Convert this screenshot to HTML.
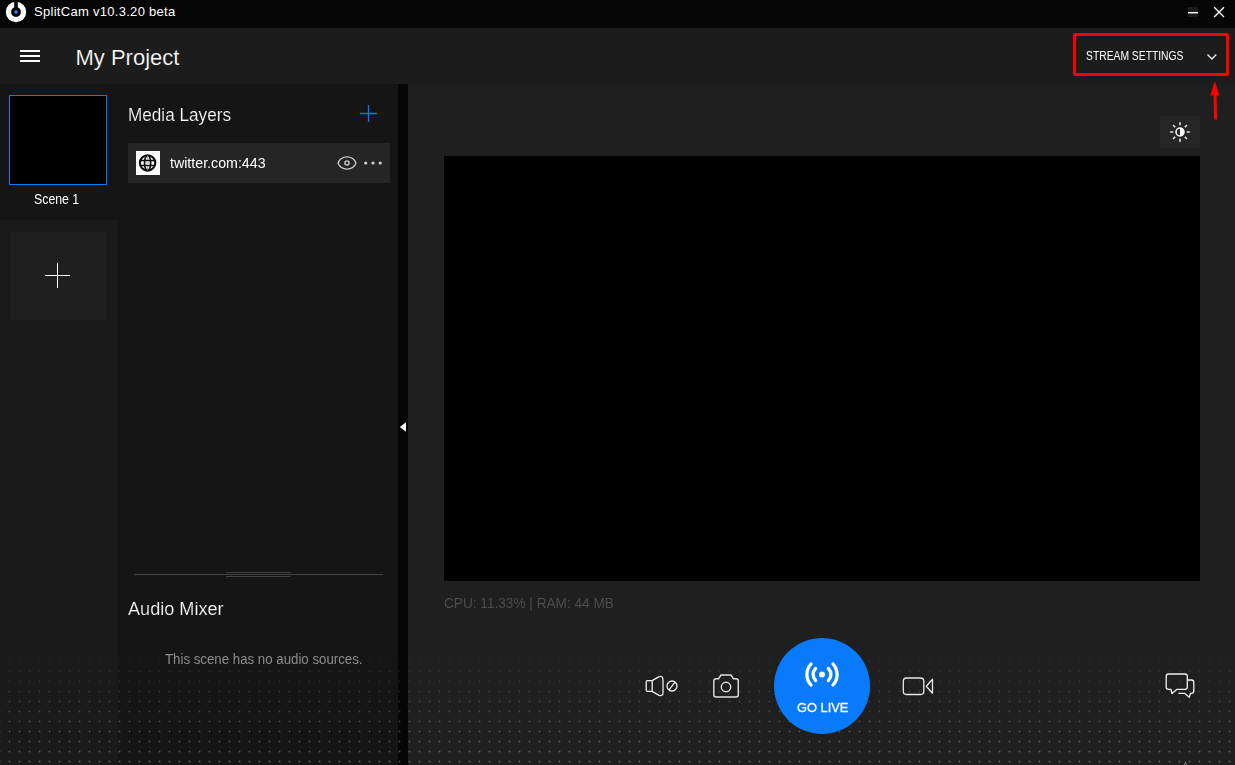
<!DOCTYPE html>
<html>
<head>
<meta charset="utf-8">
<title>SplitCam</title>
<style>
*{margin:0;padding:0;box-sizing:border-box;}
html,body{width:1235px;height:765px;overflow:hidden;background:#1f1f1f;}
body{position:relative;font-family:"Liberation Sans",sans-serif;color:#fff;}
.abs{position:absolute;}
.t{position:absolute;white-space:nowrap;line-height:1;transform-origin:0 0;}
#titlebar{left:0;top:0;width:1235px;height:28px;background:#060606;}
#header{left:0;top:28px;width:1235px;height:56px;background:#1c1c1c;}
#scenes{left:0;top:84px;width:118px;height:681px;background:#1a1a1a;}
#scenesel{left:0;top:84px;width:118px;height:136px;background:#151515;}
#media{left:118px;top:84px;width:280px;height:681px;background:#151515;}
#divider{left:398px;top:84px;width:10px;height:681px;background:#050505;}
#main{left:408px;top:84px;width:827px;height:681px;background:#1f1f1f;}
#preview{left:444px;top:156px;width:756px;height:425px;background:#000;}
#thumb{left:9px;top:95px;width:98px;height:90px;background:#000;border:1px solid #0b7af5;}
#addscene{left:10px;top:232px;width:96px;height:88px;background:#1f1f1f;}
#layer{left:128px;top:143px;width:262px;height:40px;background:#252525;}
#globebox{left:136px;top:151px;width:24px;height:24px;background:#fff;}
#bright{left:1160px;top:116px;width:40px;height:32px;background:#262626;}
#redbox{left:1073px;top:33px;width:156px;height:43px;border:3px solid #f00;border-radius:2px;}
#golive{left:774px;top:638px;width:96px;height:96px;border-radius:50%;background:#077bfb;}
svg{position:absolute;overflow:visible;}
</style>
</head>
<body>
<div class="abs" id="titlebar"></div>
<div class="abs" id="header"></div>
<div class="abs" id="scenes"></div>
<div class="abs" id="scenesel"></div>
<div class="abs" id="media"></div>
<div class="abs" id="divider"></div>
<div class="abs" id="main"></div>

<!-- title bar -->
<svg style="left:0;top:0" width="40" height="28" viewBox="0 0 40 28">
  <circle cx="16" cy="12" r="10.2" fill="#fff"/>
  <circle cx="16" cy="12" r="4.9" fill="#060606"/>
  <rect x="14.2" y="0" width="3.6" height="9" fill="#060606"/>
  <circle cx="16" cy="12" r="1.7" fill="#2f8cff"/>
</svg>
<div class="t" id="title" style="left:34px;top:5px;font-size:13px;letter-spacing:0.29px;color:#fff;">SplitCam v10.3.20 beta</div>
<svg style="left:1180px;top:0" width="55" height="28" viewBox="0 0 55 28">
  <rect x="8" y="7" width="10" height="10" fill="#1b1b1b"/>
  <rect x="8" y="12" width="10" height="1.4" fill="#fff"/>
  <rect x="34" y="7" width="10" height="10" fill="#111"/>
  <path d="M34.2 7.2 L44 17 M44 7.2 L34.2 17" stroke="#fff" stroke-width="1.25" fill="none"/>
</svg>

<!-- header -->
<svg style="left:20px;top:48px" width="20" height="16" viewBox="0 0 20 16">
  <rect x="0" y="2" width="20" height="2" fill="#fff"/>
  <rect x="0" y="7" width="20" height="2" fill="#fff"/>
  <rect x="0" y="12" width="20" height="2" fill="#fff"/>
</svg>
<div class="t" id="proj" style="-webkit-text-stroke:0.2px #1c1c1c;left:75.5px;top:47px;font-size:22px;">My Project</div>
<div class="t" id="stream" style="left:1085.5px;top:49.5px;font-size:12px;transform:scaleX(0.86);">STREAM SETTINGS</div>
<svg style="left:1205px;top:50px" width="14" height="12" viewBox="0 0 14 12">
  <path d="M2.5 4.5 L6.9 9 L11.3 4.5" stroke="#e8e8e8" stroke-width="1.4" fill="none"/>
</svg>
<div class="abs" id="redbox"></div>
<svg style="left:1205px;top:78px" width="20" height="44" viewBox="0 0 20 44">
  <path d="M10.6 40.3 L9.9 12" stroke="#f00" stroke-width="3" stroke-linecap="round" fill="none"/>
  <path d="M9.7 3 L14.5 17.6 L5.4 17.6 Z" fill="#f00"/>
</svg>

<!-- scenes -->
<div class="abs" id="thumb"></div>
<div class="t" id="scene1" style="left:33.5px;top:192px;font-size:14px;transform:scaleX(0.88);">Scene 1</div>
<div class="abs" id="addscene"></div>
<svg style="left:45px;top:263px" width="26" height="26" viewBox="0 0 26 26">
  <path d="M12.5 0 V25 M0 12.5 H25" stroke="#fff" stroke-width="1" fill="none"/>
</svg>

<!-- media layers -->
<div class="t" id="ml" style="-webkit-text-stroke:0.2px #151515;left:127.5px;top:107px;font-size:17.5px;transform:scaleX(0.98);">Media Layers</div>
<svg style="left:360px;top:105px" width="18" height="18" viewBox="0 0 18 18">
  <path d="M8.5 0 V17 M0 8.5 H17" stroke="#0b7af5" stroke-width="1.3" fill="none"/>
</svg>
<div class="abs" id="layer"></div>
<div class="abs" id="globebox"></div>
<svg style="left:136px;top:151px" width="24" height="24" viewBox="0 0 24 24">
  <g fill="none" stroke="#0a0a0a">
    <circle cx="11.6" cy="11.9" r="7.7" stroke-width="2.1"/>
    <ellipse cx="11.6" cy="11.9" rx="3.1" ry="7.7" stroke-width="1.6"/>
    <path d="M4.6 9.4 H18.6 M4.6 14.4 H18.6" stroke-width="1.5"/>
    <path d="M11.6 4.2 V9 M11.6 15 V19.6 M9.6 11.9 H13.6" stroke-width="0.8" stroke="#888"/>
  </g>
</svg>
<div class="t" id="tw" style="left:170px;top:156px;font-size:14px;transform:scaleX(1.015);">twitter.com:443</div>
<svg style="left:337px;top:156px" width="20" height="14" viewBox="0 0 20 14">
  <path d="M1 7 C2.6 3 6.2 0.9 10 0.9 C13.8 0.9 17.4 3 19 7 C17.4 11 13.8 13.1 10 13.1 C6.2 13.1 2.6 11 1 7 Z" fill="none" stroke="#cfcfcf" stroke-width="1.3"/>
  <circle cx="10" cy="7" r="2.1" fill="none" stroke="#cfcfcf" stroke-width="1.4"/>
</svg>
<svg style="left:363px;top:160px" width="20" height="6" viewBox="0 0 20 6">
  <circle cx="2.7" cy="3" r="1.6" fill="#d0d0d0"/><circle cx="10" cy="3" r="1.6" fill="#d0d0d0"/><circle cx="17.2" cy="3" r="1.6" fill="#d0d0d0"/>
</svg>

<!-- separator / audio mixer -->
<div class="abs" style="left:134px;top:574px;width:249px;height:1px;background:#424242;"></div>
<div class="abs" style="left:226px;top:572px;width:65px;height:1px;background:#424242;"></div>
<div class="abs" style="left:226px;top:576px;width:65px;height:1px;background:#424242;"></div>
<div class="t" id="am" style="-webkit-text-stroke:0.2px #151515;left:128px;top:601px;font-size:17.5px;transform:scaleX(1.034);">Audio Mixer</div>
<div class="t" id="noaud" style="left:164.5px;top:652px;font-size:14px;transform:scaleX(0.947);color:#8c8c8c;">This scene has no audio sources.</div>

<!-- divider arrow -->
<svg style="left:398px;top:420px" width="10" height="14" viewBox="0 0 10 14">
  <path d="M1.8 7 L8 2.2 L8 11.8 Z" fill="#fff"/>
</svg>

<!-- main -->
<div class="abs" id="bright"></div>
<svg style="left:1168px;top:120px" width="24" height="24" viewBox="0 0 24 24">
  <g stroke="#e6e6e6" stroke-width="1.6" stroke-linecap="butt">
    <path d="M12 2.2 V5.2 M12 18.8 V21.8 M2.2 12 H5.2 M18.8 12 H21.8 M5.1 5.1 L7.2 7.2 M16.8 16.8 L18.9 18.9 M5.1 18.9 L7.2 16.8 M16.8 7.2 L18.9 5.1"/>
  </g>
  <circle cx="12" cy="12" r="4" fill="none" stroke="#fff" stroke-width="1.5"/>
  <path d="M12 8 A4 4 0 0 1 12 16 Z" fill="#fff"/>
</svg>
<div class="abs" id="preview"></div>
<div class="t" id="cpu" style="left:444px;top:596px;font-size:14px;transform:scaleX(0.973);color:#4c4c4c;">CPU: 11.33% | RAM: 44 MB</div>

<!-- dots -->
<svg style="left:0;top:655px" width="1235" height="110" viewBox="0 0 1235 110">
  <defs>
    <pattern id="p" x="5" y="2" width="10" height="10" patternUnits="userSpaceOnUse"><circle cx="4.5" cy="4.5" r="0.95" fill="#fff"/></pattern>
    <linearGradient id="g" x1="0" y1="0" x2="0" y2="1"><stop offset="0" stop-color="#fff" stop-opacity="0.04"/><stop offset="1" stop-color="#fff" stop-opacity="0.31"/></linearGradient>
    <mask id="m"><rect width="1235" height="110" fill="url(#g)"/></mask>
  </defs>
  <rect width="1235" height="110" fill="url(#p)" mask="url(#m)"/>
</svg>

<!-- bottom controls -->
<svg style="left:640px;top:670px" width="50" height="32" viewBox="0 0 50 32">
  <g fill="none" stroke="#f0f0f0" stroke-width="1.3" stroke-linejoin="round">
    <path d="M7.6 10.6 H12.2 L18.6 6.9 Q23 5 23 9.8 V22.2 Q23 27 18.6 25.1 L12.2 21.4 H7.6 Q6.2 21.4 6.2 20 V12 Q6.2 10.6 7.6 10.6 Z M12.2 10.6 V21.4"/>
    <circle cx="32" cy="16" r="5"/>
    <path d="M29 19.8 L35 12.2"/>
  </g>
</svg>
<svg style="left:710px;top:670px" width="32" height="32" viewBox="0 0 32 32">
  <g fill="none" stroke="#e0e0e0" stroke-width="1.4" stroke-linejoin="round">
    <path d="M6 8.8 H8.5 L11 5 H21 L23.5 8.8 H26 Q28.3 8.8 28.3 11 V25 Q28.3 27 26 27 H6 Q3.8 27 3.8 25 V11 Q3.8 8.8 6 8.8 Z"/>
    <circle cx="16" cy="17" r="4.7"/>
  </g>
</svg>
<div class="abs" id="golive"></div>
<svg style="left:800px;top:658px" width="44" height="34" viewBox="0 0 44 34">
  <circle cx="22" cy="16.5" r="3" fill="#fff"/>
  <g fill="none" stroke="#fff" stroke-width="3.3" stroke-linecap="round">
    <path d="M15.6 10.5 A8.5 8.5 0 0 0 15.6 22.5"/>
    <path d="M28.4 10.5 A8.5 8.5 0 0 1 28.4 22.5"/>
    <path d="M11 6 A15.5 15.5 0 0 0 11 27"/>
    <path d="M33 6 A15.5 15.5 0 0 1 33 27"/>
  </g>
</svg>
<div class="t" id="gl" style="left:797px;top:700.7px;font-size:13.5px;transform:scaleX(0.95);-webkit-text-stroke:0.3px #fff;">GO LIVE</div>
<svg style="left:898px;top:670px" width="40" height="32" viewBox="0 0 40 32">
  <g fill="none" stroke="#e8e8e8" stroke-width="1.3" stroke-linejoin="round">
    <rect x="5.3" y="8" width="20.5" height="16.5" rx="3.2"/>
    <path d="M28.3 16.2 L34.5 9.2 V23.2 Z"/>
  </g>
</svg>
<svg style="left:1160px;top:668px" width="40" height="34" viewBox="0 0 40 34">
  <g fill="none" stroke="#f0f0f0" stroke-width="1.3" stroke-linejoin="round">
    <path d="M8.5 6 H25 Q27.3 6 27.3 8.3 V19 Q27.3 21.3 25 21.3 H17 L12 25.5 L11 21.3 H8.5 Q6.2 21.3 6.2 19 V8.3 Q6.2 6 8.5 6 Z"/>
    <path d="M27.3 12 H31.5 Q33.8 12 33.8 14.3 V23 Q33.8 25.3 31.5 25.3 H30.5 L29.3 29.3 L24.5 25.3 H18.5"/>
  </g>
</svg>
<svg style="left:1180px;top:760px" width="12" height="8" viewBox="0 0 12 8">
  <path d="M3.4 7.5 L5.5 1.6 L7.6 7.5" stroke="#777" stroke-width="1" fill="none"/>
</svg>
</body>
</html>
